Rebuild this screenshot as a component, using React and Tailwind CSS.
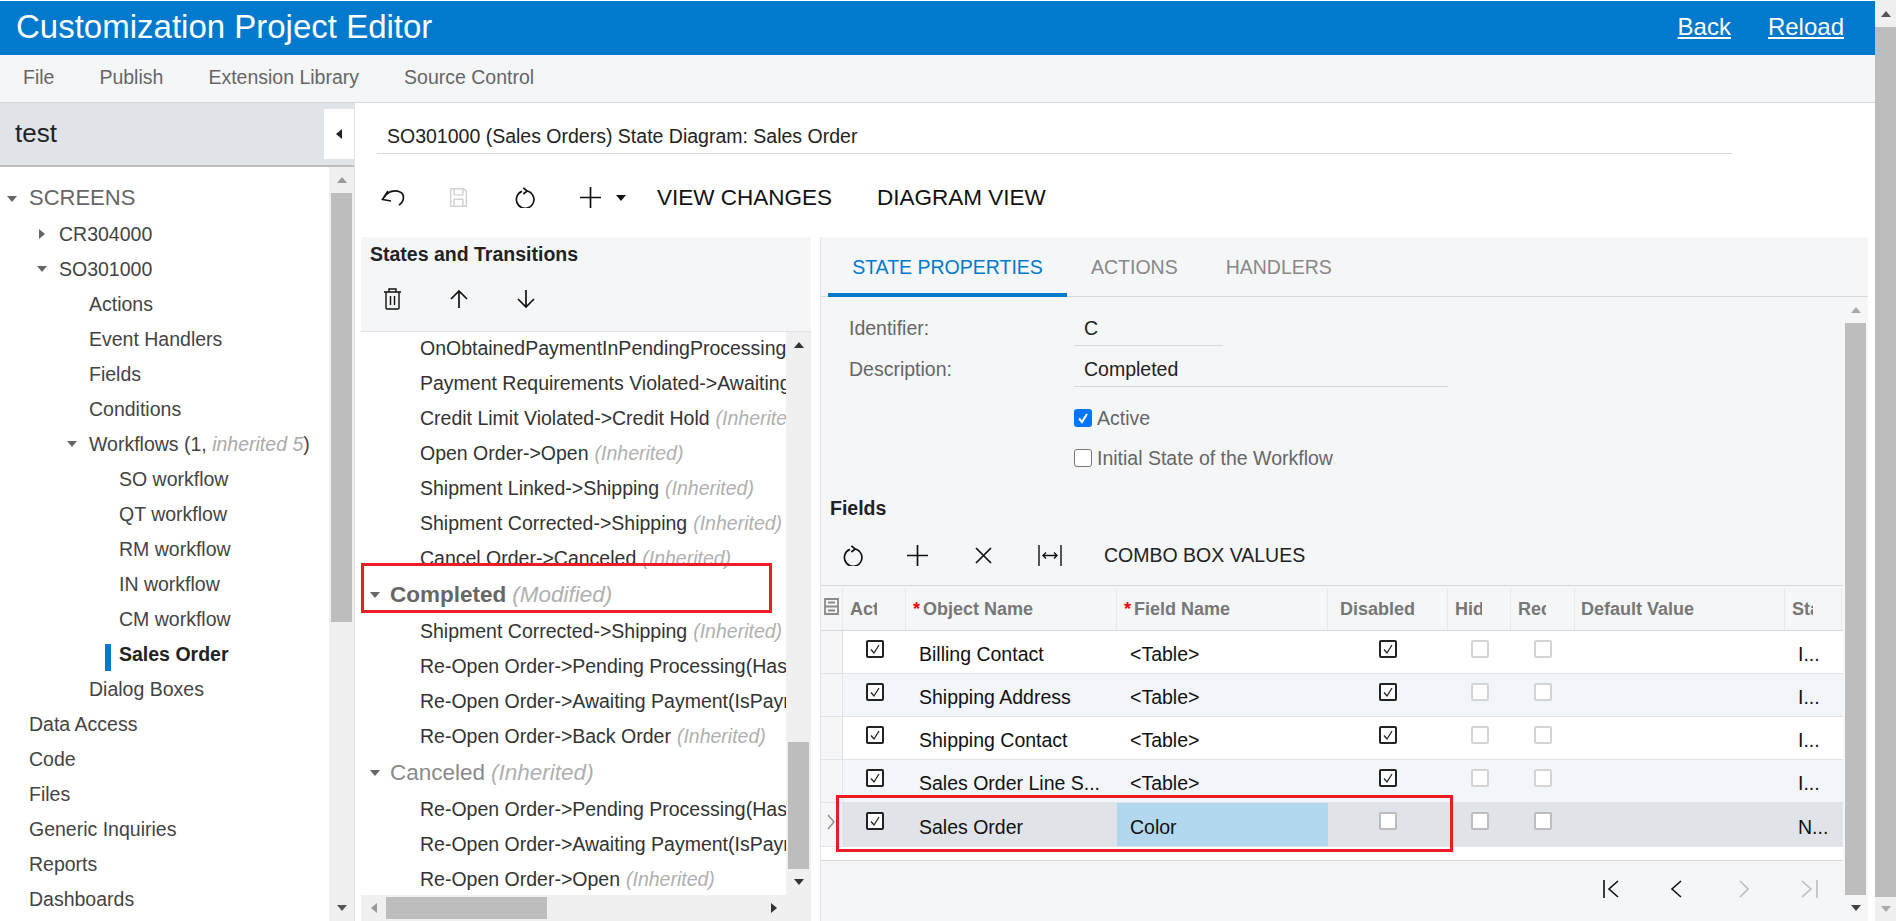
import React from 'react';

const Tri = ({ dir = 'down', className = '' }) => {
    const d = { down: 'M0 2h10L5 8z', up: 'M0 8h10L5 2z', left: 'M8 0v10L2 5z', right: 'M2 0v10l6-5z' }[dir];
    return (
        <svg viewBox="0 0 10 10" className={`w-[10px] h-[10px] fill-current shrink-0 ${className}`}>
            <path d={d} />
        </svg>
    );
};

const Undo = () => (
    <svg viewBox="0 0 24 18" className="w-[24px] h-[18px] shrink-0" fill="none" stroke="#111" strokeWidth="1.7">
        <path d="M7 2 1.500 10.500 10 12M3.500 8C7 2 14 .8 19 3c4.500 2 5 9-1 13" />
    </svg>
);

const Refresh = () => (
    <svg viewBox="0 0 24 24" className="w-[21px] h-[21px] shrink-0" fill="none" stroke="#111" strokeWidth="1.9">
        <path d="M14 4.600A10 10 0 1 1 8 5M9.500 1 14 4.600 9.500 8" />
    </svg>
);

const Save = () => (
    <svg viewBox="0 0 24 24" className="w-[21px] h-[21px] shrink-0" fill="none" stroke="#d2d2d2" strokeWidth="1.7" strokeLinejoin="round">
        <path d="M3 2h15l3 3v17H3zM7 2v7h10V2M7 22v-8h10v8" />
    </svg>
);

const PlusIcon = () => (
    <svg viewBox="0 0 21 21" className="w-[21px] h-[21px] shrink-0" fill="none" stroke="#111" strokeWidth="1.7">
        <path d="M10.500 0v21M0 10.500h21" />
    </svg>
);

const Trash = () => (
    <svg viewBox="0 0 17 22" className="w-[17px] h-[22px] shrink-0" fill="none" stroke="#111" strokeWidth="1.4">
        <path d="M0 4h17M5 4V1h7v3M2 4v16a1 1 0 0 0 1 1h11a1 1 0 0 0 1-1V4M6.500 8v9M10.500 8v9" />
    </svg>
);

const ArrowUp = () => (
    <svg viewBox="0 0 18 18" className="w-[18px] h-[18px] shrink-0" fill="none" stroke="#111" strokeWidth="1.7">
        <path d="M9 18V1M1 9l8-8 8 8" />
    </svg>
);

const ArrowDown = () => (
    <svg viewBox="0 0 18 18" className="w-[18px] h-[18px] shrink-0" fill="none" stroke="#111" strokeWidth="1.7">
        <path d="M9 0v17M1 9l8 8 8-8" />
    </svg>
);

const Cross = () => (
    <svg viewBox="0 0 17 17" className="w-[17px] h-[17px] shrink-0" fill="none" stroke="#111" strokeWidth="1.7">
        <path d="M1 1l15 15M16 1 1 16" />
    </svg>
);

const FitCols = () => (
    <svg viewBox="0 0 24 21" className="w-[24px] h-[21px] shrink-0" fill="none" stroke="#111" strokeWidth="1.4">
        <path d="M1 0v21M23 0v21M5 10.500h14M8 7.500l-3 3 3 3M16 7.500l3 3-3 3" />
    </svg>
);

const ColsIcon = () => (
    <svg viewBox="0 0 15 17" className="w-[15px] h-[17px]" fill="none" stroke="#8a8a8a" strokeWidth="1.8">
        <path d="M1 1h13v15H1zM1 8.500h13M4 4.500h7M4 12.500h7" />
    </svg>
);

const Pager = ({ d, w, on }) => (
    <svg viewBox={`0 0 ${w} 18`} className="h-[18px] shrink-0" style={{ width: w }} fill="none" stroke={on ? '#111' : '#bdbdbd'} strokeWidth="1.6">
        <path d={d} />
    </svg>
);

const Tree = ({ pad, children, arrow, bold }) => (
    <div className="h-[35px] flex items-center relative whitespace-nowrap" style={{ paddingLeft: pad }}>
        {arrow && (
            <span className="absolute text-[#666]" style={{ left: pad - 22 }}>
                <Tri dir={arrow} />
            </span>
        )}
        {bold && <span className="absolute left-[105px] top-[8px] w-[6px] h-[27px] bg-[#0179cd]" />}
        <span className={bold ? 'font-bold text-[#222]' : ''}>{children}</span>
    </div>
);

const Inh = ({ children = '(Inherited)' }) => <i className="text-[#b0b0b0] ml-[6px]">{children}</i>;

const Item = ({ text, inh }) => (
    <div className="h-[35px] pl-[59px] flex items-center whitespace-nowrap text-[#333]">
        {text}
        {inh && <Inh />}
    </div>
);

const CheckBox = ({ on, muted }) => (
    <span className={`w-[18px] h-[18px] rounded-[2px] border-2 flex items-center justify-center bg-white ${on ? 'border-[#222]' : muted ? 'border-[#d4d4d4]' : 'border-[#bdbdbd]'}`}>
        {on && (
            <svg viewBox="0 0 12 12" className="w-3 h-3" fill="none" stroke="#222" strokeWidth="1.3">
                <path d="M2 6.500 5 10l5-8" />
            </svg>
        )}
    </span>
);

const cols = 'grid grid-cols-[22px_63px_211px_211px_120px_63px_64px_210px_57px]';

const Row = ({ name, field, dis, last, active, alt }) => (
    <div className={`${cols} border-b border-[#e0e3e8] text-[#111] text-[19.500px] shrink-0 ${active ? 'h-[44px] bg-[#e0e3e8]' : alt ? 'h-[43px] bg-[#f2f5fa]' : 'h-[43px] bg-white'}`}>
        <div className="bg-[#f5f6f8] border-r border-[#e0e3e8] flex items-center pl-[6px] pb-[6px]">
            {active && (
                <svg viewBox="0 0 8 16" className="w-[8px] h-[16px]" fill="none" stroke="#888" strokeWidth="1.3">
                    <path d="M1 1l6 7-6 7" />
                </svg>
            )}
        </div>
        <div className="flex justify-center pt-[9px]"><CheckBox on /></div>
        <div className={`pl-[13px] truncate pr-1 ${active ? 'pt-[12px]' : 'pt-[11px]'}`}>{name}</div>
        <div className={`pl-[13px] ${active ? 'pt-[12px] bg-[#b3d7ef]' : 'pt-[11px]'}`}>{field}</div>
        <div className="flex justify-center pt-[9px]"><CheckBox on={dis} /></div>
        <div className="flex justify-center pt-[9px]"><CheckBox muted={!active} /></div>
        <div className="flex justify-center pt-[9px]"><CheckBox muted={!active} /></div>
        <div />
        <div className={`pl-[13px] ${active ? 'pt-[12px]' : 'pt-[11px]'}`}>{last}</div>
    </div>
);

const Head = ({ label, star, left = 7 }) => (
    <div className="border-r border-[#e8e9ec] flex items-center pr-[28px] min-w-0" style={{ paddingLeft: left }}>
        <div className="overflow-hidden whitespace-nowrap">
            {star && <span className="text-[#f00] mr-[3px]">*</span>}
            {label}
        </div>
    </div>
);

export default function App() {
    return (
        <div className="w-[1896px] h-[921px] flex overflow-hidden bg-white text-[19.500px] leading-[24px] font-['Liberation_Sans',Arial,sans-serif]">
            <div className="w-[1875px] flex flex-col">
                <div className="h-[54px] mt-px bg-[#0179cd] flex items-center justify-between pl-[16px] pr-[31px] pb-[2px] text-white shrink-0">
                    <span className="text-[33px]">Customization Project Editor</span>
                    <div className="flex gap-[37px] text-[24px] underline">
                        <span>Back</span>
                        <span>Reload</span>
                    </div>
                </div>
                <div className="h-[48px] bg-[#f5f6f8] border-b border-[#d6d8dc] flex items-center pl-[23px] pb-[4px] gap-[45px] text-[#666] shrink-0">
                    <span>File</span>
                    <span>Publish</span>
                    <span>Extension Library</span>
                    <span>Source Control</span>
                </div>
                <div className="flex flex-1 min-h-0">
                    <div className="w-[355px] shrink-0 border-r border-[#e0e3e8] flex flex-col">
                        <div className="h-[64px] bg-[#e0e3e8] border-b-2 border-[#bdbdbd] flex items-center pl-[15px] pb-[2px] text-[26px] relative text-[#222] shrink-0">
                            test
                            <div className="absolute right-0 top-[6px] w-[30px] h-[50px] bg-white flex items-center justify-center text-[#222]">
                                <Tri dir="left" />
                            </div>
                        </div>
                        <div className="flex flex-1 min-h-0">
                            <div className="flex-1 overflow-hidden pt-[14px] text-[#444]">
                                <Tree pad={29} arrow="down"><span className="text-[22px] text-[#666] relative -top-[1px]">SCREENS</span></Tree>
                                <Tree pad={59} arrow="right">CR304000</Tree>
                                <Tree pad={59} arrow="down">SO301000</Tree>
                                <Tree pad={89}>Actions</Tree>
                                <Tree pad={89}>Event Handlers</Tree>
                                <Tree pad={89}>Fields</Tree>
                                <Tree pad={89}>Conditions</Tree>
                                <Tree pad={89} arrow="down">Workflows (1, <i className="text-[#aaa]">inherited 5</i>)</Tree>
                                <Tree pad={119}>SO workflow</Tree>
                                <Tree pad={119}>QT workflow</Tree>
                                <Tree pad={119}>RM workflow</Tree>
                                <Tree pad={119}>IN workflow</Tree>
                                <Tree pad={119}>CM workflow</Tree>
                                <Tree pad={119} bold>Sales Order</Tree>
                                <Tree pad={89}>Dialog Boxes</Tree>
                                <Tree pad={29}>Data Access</Tree>
                                <Tree pad={29}>Code</Tree>
                                <Tree pad={29}>Files</Tree>
                                <Tree pad={29}>Generic Inquiries</Tree>
                                <Tree pad={29}>Reports</Tree>
                                <Tree pad={29}>Dashboards</Tree>
                            </div>
                            <div className="w-[25px] bg-[#f0f0f0] flex flex-col items-center text-[#999] shrink-0 px-[2px]">
                                <div className="h-[26px] flex items-center"><Tri dir="up" /></div>
                                <div className="w-full h-[429px] bg-[#bdbdbd]" />
                                <div className="flex-1" />
                                <div className="h-[26px] flex items-center text-[#555]"><Tri /></div>
                            </div>
                        </div>
                    </div>

                    <div className="flex-1 flex flex-col min-w-0">
                        <div className="h-[51px] pl-[22px] pr-[143px] pt-[21px] shrink-0">
                            <div className="h-[30px] border-b border-[#d6d8dc] pl-[10px] text-[#222] leading-[24px]">
                                SO301000 (Sales Orders) State Diagram: Sales Order
                            </div>
                        </div>
                        <div className="h-[83px] flex items-center pl-[26px] pt-[4px] text-[22.500px] text-[#111] shrink-0">
                            <Undo />
                            <span className="ml-[43px]"><Save /></span>
                            <span className="ml-[46px]"><Refresh /></span>
                            <span className="ml-[44px]"><PlusIcon /></span>
                            <Tri className="ml-[15px]" />
                            <span className="ml-[31px]">VIEW CHANGES</span>
                            <span className="ml-[45px]">DIAGRAM VIEW</span>
                        </div>
                        <div className="flex flex-1 min-h-0 pl-[6px] gap-[9px] pr-[7px]">
                            <div className="w-[450px] bg-[#f5f6f8] flex flex-col shrink-0 relative">
                                <div className="h-[95px] border-b border-[#e0e3e8] pl-[9px] shrink-0">
                                    <div className="font-bold text-[#222] h-[35px] pb-[2px] flex items-center">States and Transitions</div>
                                    <div className="flex items-center h-[52px] pl-[14px] pt-[2px] gap-[49px]">
                                        <Trash />
                                        <ArrowUp />
                                        <ArrowDown />
                                    </div>
                                </div>
                                <div className="flex flex-1 min-h-0">
                                    <div className="w-[425px] bg-white overflow-hidden">
                                        <div className="-mt-[2px]">
                                            <Item text="OnObtainedPaymentInPendingProcessing" />
                                            <Item text="Payment Requirements Violated->Awaiting Payment" />
                                            <Item text="Credit Limit Violated->Credit Hold" inh />
                                            <Item text="Open Order->Open" inh />
                                            <Item text="Shipment Linked->Shipping" inh />
                                            <Item text="Shipment Corrected->Shipping" inh />
                                            <Item text="Cancel Order->Canceled" inh />
                                            <div className="h-[38px] flex items-center pl-[29px] pt-[1px] relative text-[22.500px] text-[#666]">
                                                <span className="absolute left-[9px] text-[#666]"><Tri /></span>
                                                <b>Completed</b>
                                                <i className="text-[#b0b0b0] ml-[6px]">(Modified)</i>
                                            </div>
                                            <Item text="Shipment Corrected->Shipping" inh />
                                            <Item text="Re-Open Order->Pending Processing(HasPayment)" />
                                            <Item text="Re-Open Order->Awaiting Payment(IsPaymentRequired)" />
                                            <Item text="Re-Open Order->Back Order" inh />
                                            <div className="h-[38px] flex items-center pl-[29px] pt-[1px] relative text-[22.500px] text-[#8a8a8a]">
                                                <span className="absolute left-[9px] text-[#666]"><Tri /></span>
                                                Canceled
                                                <i className="text-[#b0b0b0] ml-[6px]">(Inherited)</i>
                                            </div>
                                            <Item text="Re-Open Order->Pending Processing(HasPayment)" />
                                            <Item text="Re-Open Order->Awaiting Payment(IsPaymentRequired)" />
                                            <Item text="Re-Open Order->Open" inh />
                                        </div>
                                    </div>
                                    <div className="w-[25px] bg-[#f0f0f0] flex flex-col items-center text-[#333] shrink-0">
                                        <div className="h-[26px] flex items-center"><Tri dir="up" /></div>
                                        <div className="flex-1" />
                                        <div className="w-[21px] h-[127px] bg-[#bdbdbd]" />
                                        <div className="h-[26px] flex items-center"><Tri /></div>
                                    </div>
                                </div>
                                <div className="h-[26px] bg-[#f0f0f0] flex items-center shrink-0 text-[#999]">
                                    <div className="w-[25px] flex justify-center"><Tri dir="left" /></div>
                                    <div className="w-[161px] h-[22px] bg-[#bdbdbd]" />
                                    <div className="ml-[214px] w-[25px] flex justify-center text-[#333]"><Tri dir="right" /></div>
                                </div>
                                <div className="absolute left-0 top-[326px] w-[411px] h-[50px] border-[3px] border-[#ed1c24]" />
                            </div>

                            <div className="flex-1 bg-[#f5f6f8] border-l border-[#e0e3e8] flex flex-col min-w-0 relative">
                                <div className="h-[60px] border-b border-[#d6d8dc] flex pl-[7px] shrink-0">
                                    <div className="w-[239px] h-[60px] pt-[3px] border-b-[4px] border-[#0179cd] text-[#0179cd] flex items-center justify-center">STATE PROPERTIES</div>
                                    <div className="ml-[24px] h-[59px] pt-[1px] flex items-center text-[#888]">ACTIONS</div>
                                    <div className="ml-[48px] h-[59px] pt-[1px] flex items-center text-[#888]">HANDLERS</div>
                                </div>
                                <div className="flex flex-1 min-h-0">
                                    <div className="flex-1 min-w-0 flex flex-col">
                                        <div className="h-[193px] pl-[28px] shrink-0 text-[#666]">
                                            <div className="flex pt-[12px] items-center">
                                                <span className="w-[225px]">Identifier:</span>
                                                <div className="w-[149px] h-[37px] pt-[2px] border-b border-[#d6d8dc] pl-[10px] text-[#222] flex items-center">C</div>
                                            </div>
                                            <div className="flex mt-[4px] items-center">
                                                <span className="w-[225px]">Description:</span>
                                                <div className="w-[374px] h-[37px] pt-[2px] border-b border-[#d6d8dc] pl-[10px] text-[#222] flex items-center">Completed</div>
                                            </div>
                                            <div className="ml-[225px] mt-[22px] h-[18px] flex items-center gap-[5px]">
                                                <span className="w-[18px] h-[18px] rounded-[3px] bg-[#0075ff] flex items-center justify-center">
                                                    <svg viewBox="0 0 12 12" className="w-3 h-3" fill="none" stroke="#fff" strokeWidth="2"><path d="M2 6.500 5 10l5-8" /></svg>
                                                </span>
                                                Active
                                            </div>
                                            <div className="ml-[225px] mt-[22px] h-[18px] flex items-center gap-[5px]">
                                                <span className="w-[18px] h-[18px] rounded-[3px] border border-[#777] bg-white" />
                                                Initial State of the Workflow
                                            </div>
                                        </div>
                                        <div className="pl-[9px] font-bold text-[#222] h-[35px] flex items-center shrink-0">Fields</div>
                                        <div className="h-[60px] flex items-center pl-[22px] text-[#222] shrink-0">
                                            <Refresh />
                                            <span className="ml-[43px]"><PlusIcon /></span>
                                            <span className="ml-[47px]"><Cross /></span>
                                            <span className="ml-[46px]"><FitCols /></span>
                                            <span className="ml-[42px]">COMBO BOX VALUES</span>
                                        </div>
                                        <div className={`${cols} h-[46px] pt-[2px] border-y border-[#d6d8dc] font-bold text-[#777] text-[18px] shrink-0`}>
                                            <div className="border-r border-[#e8e9ec] flex items-center pl-[3px] pb-[6px]"><ColsIcon /></div>
                                            <Head label="Act" />
                                            <Head label="Object Name" star />
                                            <Head label="Field Name" star />
                                            <Head label="Disabled" left={12} />
                                            <Head label="Hid" />
                                            <Head label="Rec" />
                                            <Head label="Default Value" left={6} />
                                            <Head label="Sta" />
                                        </div>
                                        <Row name="Billing Contact" field="<Table>" dis last="I..." />
                                        <Row name="Shipping Address" field="<Table>" dis last="I..." alt />
                                        <Row name="Shipping Contact" field="<Table>" dis last="I..." />
                                        <Row name="Sales Order Line S..." field="<Table>" dis last="I..." alt />
                                        <Row name="Sales Order" field="Color" last="N..." active />
                                        <div className="h-[14px] bg-white border-b border-[#d6d8dc] shrink-0" />
                                        <div className="flex-1 flex items-center justify-end pr-[25px] pb-[4px]">
                                            <Pager w={16} on d="M1 0v18M15 1 6 9l9 8" />
                                            <span className="ml-[51px]"><Pager w={12} on d="M11 1 2 9l9 8" /></span>
                                            <span className="ml-[57px]"><Pager w={10} d="M1 1l8 8-8 8" /></span>
                                            <span className="ml-[52px]"><Pager w={17} d="M1 1l9 8-9 8M16 0v18" /></span>
                                        </div>
                                    </div>
                                    <div className="w-[25px] flex flex-col items-center shrink-0">
                                        <div className="h-[26px] flex items-center text-[#aaa]"><Tri dir="up" /></div>
                                        <div className="w-[21px] flex-1 bg-[#bdbdbd]" />
                                        <div className="h-[26px] flex items-center text-[#444]"><Tri /></div>
                                    </div>
                                </div>
                                <div className="absolute left-[15px] top-[558px] w-[617px] h-[57px] border-[3px] border-[#ed1c24]" />
                            </div>
                        </div>
                    </div>
                </div>
            </div>
            <div className="w-[21px] bg-[#f0f0f0] flex flex-col items-center text-[#555]">
                <div className="h-[27px] flex items-center"><Tri dir="up" /></div>
                <div className="w-full flex-1 bg-[#bdbdbd]" />
                <div className="h-[24px] flex items-center text-[#aaa]"><Tri /></div>
            </div>
        </div>
    );
}
